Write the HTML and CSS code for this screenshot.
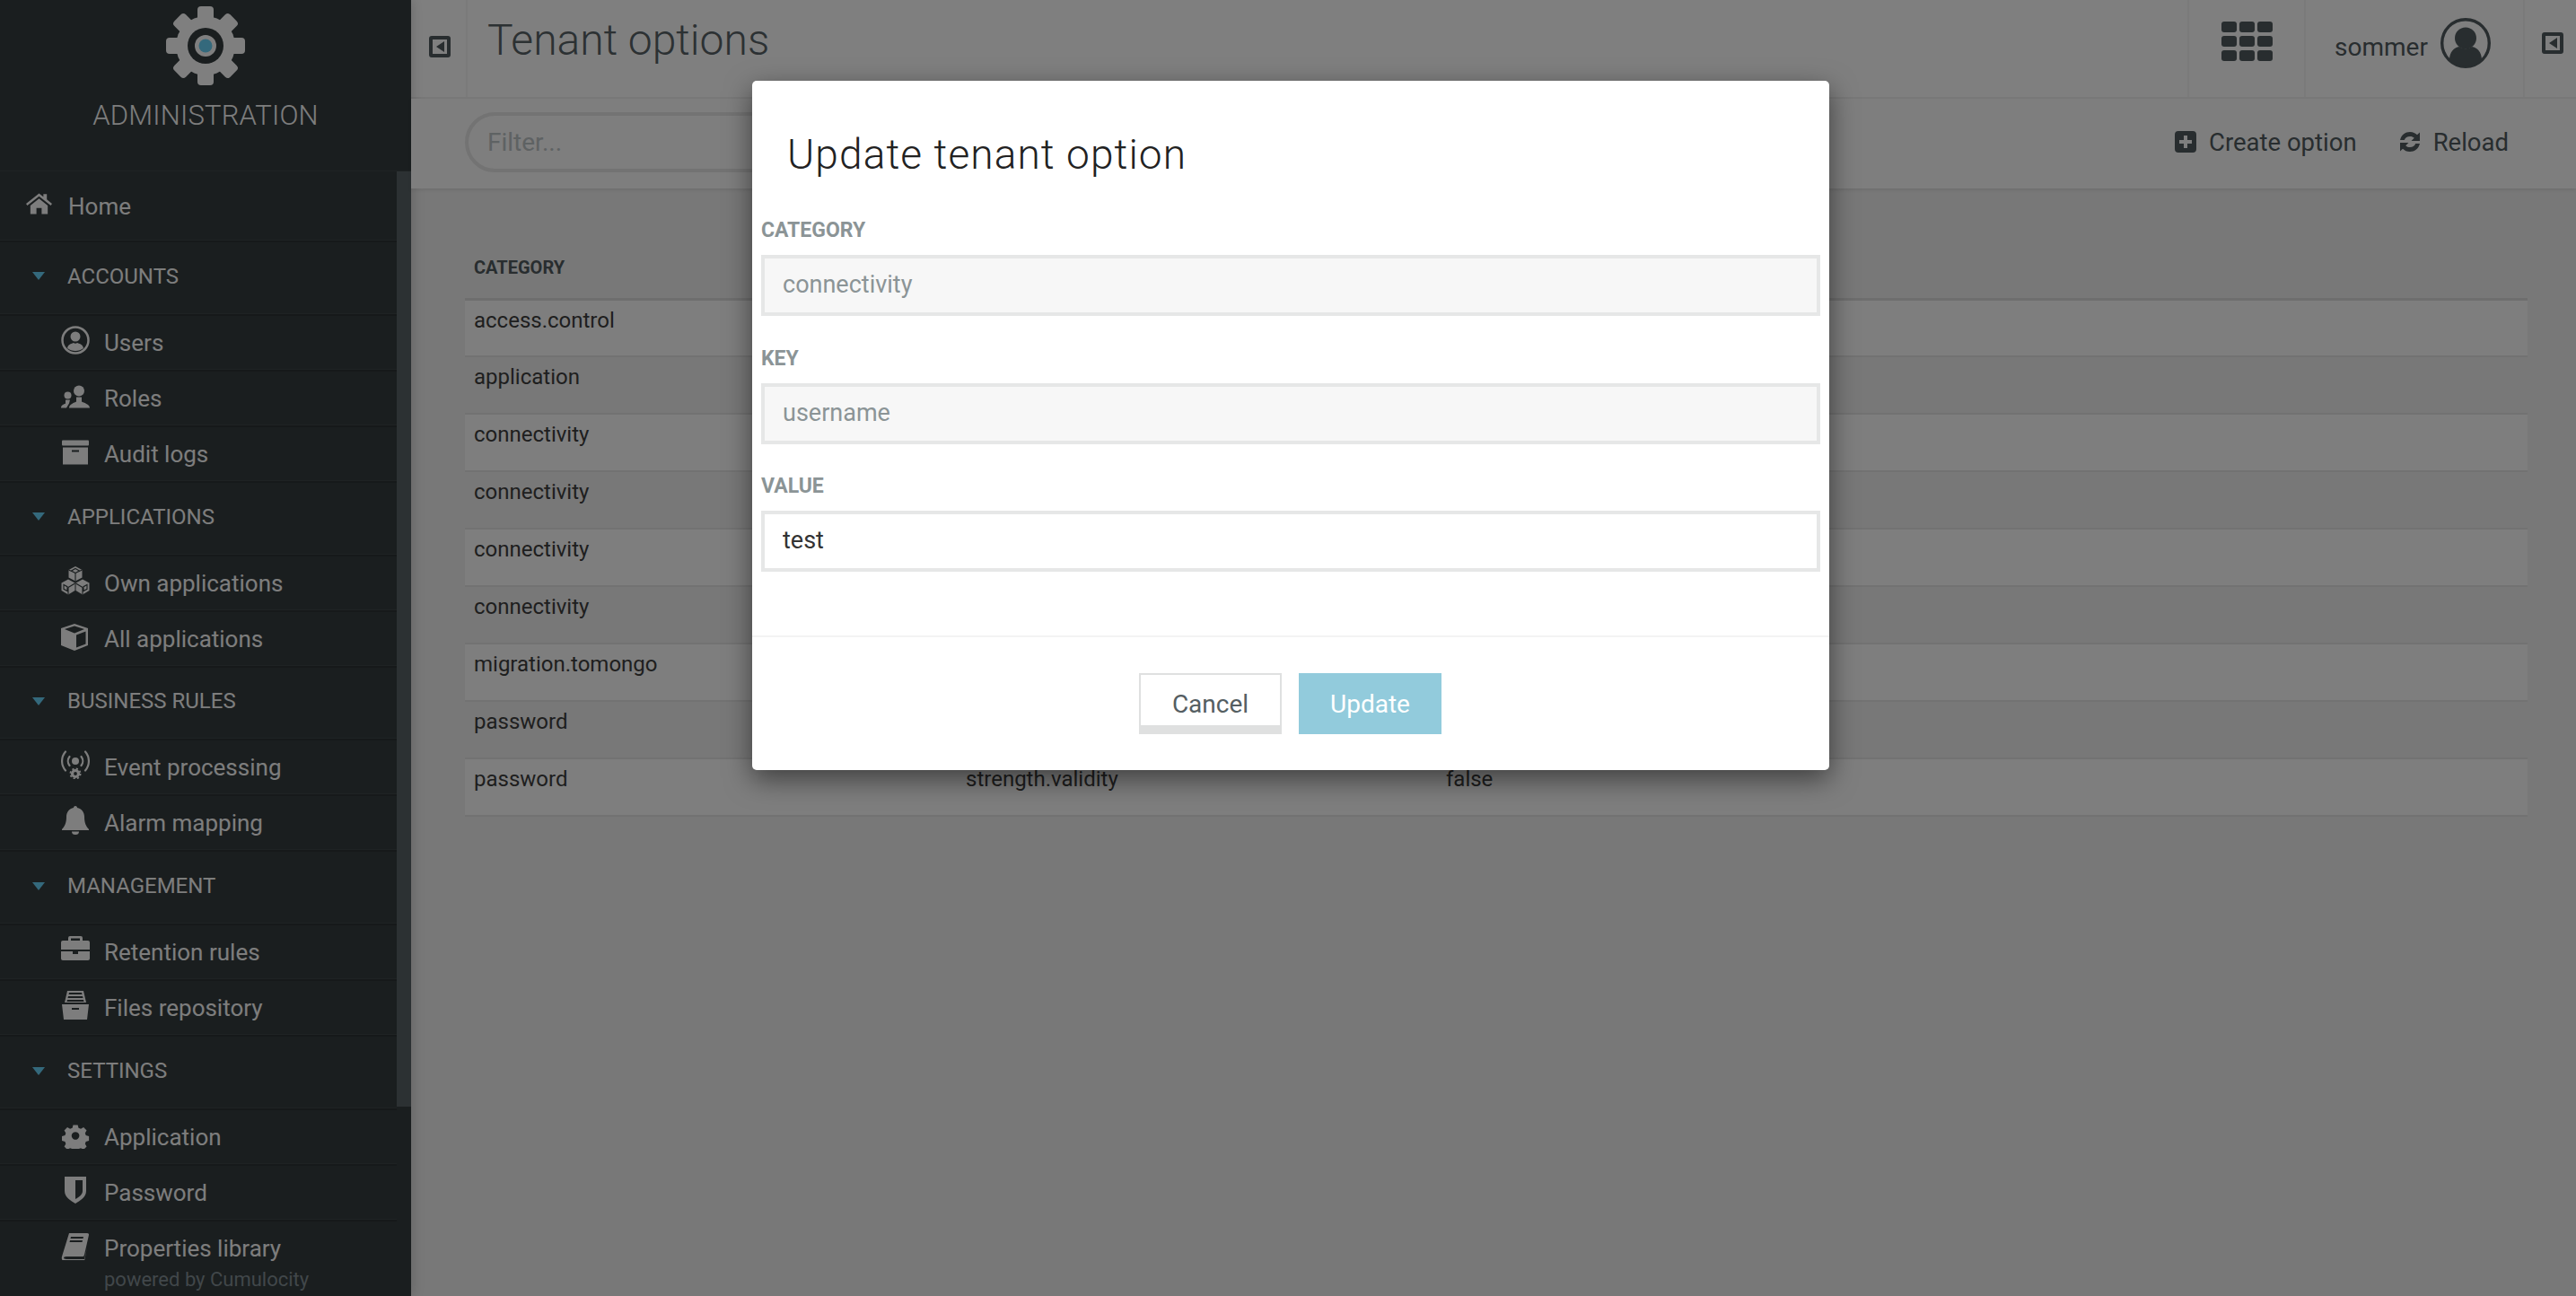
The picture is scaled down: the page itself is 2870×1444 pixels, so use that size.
FILE: index.html
```html
<!DOCTYPE html>
<html lang="en">
<head>
    <meta charset="UTF-8">
    <title>Tenant options</title>
    <link rel="stylesheet" href="styles.css">
</head>
<body>
    <div class="app">
        <aside class="sidebar">
            <div class="brand">
                <svg class="brand-gear" viewBox="0 0 88 88">
                    <g fill="#fff">
                        <rect x="35" y="0" width="18" height="22" rx="4"/>
                        <rect x="35" y="0" width="18" height="22" rx="4" transform="rotate(45 44 44)"/>
                        <rect x="35" y="0" width="18" height="22" rx="4" transform="rotate(90 44 44)"/>
                        <rect x="35" y="0" width="18" height="22" rx="4" transform="rotate(135 44 44)"/>
                        <rect x="35" y="0" width="18" height="22" rx="4" transform="rotate(180 44 44)"/>
                        <rect x="35" y="0" width="18" height="22" rx="4" transform="rotate(225 44 44)"/>
                        <rect x="35" y="0" width="18" height="22" rx="4" transform="rotate(270 44 44)"/>
                        <rect x="35" y="0" width="18" height="22" rx="4" transform="rotate(315 44 44)"/>
                        <circle cx="44" cy="44" r="33"/>
                    </g>
                    <circle cx="44" cy="44" r="20" fill="#343c3e"/>
                    <circle cx="44" cy="44" r="12" fill="#fff"/>
                    <circle cx="44" cy="44" r="7.5" fill="#68d2f8"/>
                </svg>
                <div class="brand-name">ADMINISTRATION</div>
            </div>

            <nav class="nav">
                <div class="scroll-thumb"></div>
                <a class="nav-home">
                    <svg class="home-icon" viewBox="0 0 30 24"><path d="M15 0 20 4V1h4v6l6 5-1.5 2L15 3.5 1.5 14 0 12z"/><path d="M5 14 15 6l10 8v10h-7v-7h-6v7H5z"/></svg>
                    Home
                </a>

                <div class="nav-group"><span class="caret"></span>ACCOUNTS</div>
                <a class="nav-item">
                    <svg class="nav-icon" viewBox="0 0 32 32"><circle cx="16" cy="16" r="14.5" fill="none" stroke="#fafafa" stroke-width="2.5"/><circle cx="16" cy="12" r="5.5"/><path d="M7 25c1-5 5-5 7-6 1 1 3 1 4 0 2 1 6 1 7 6-5 4-13 4-18 0z"/></svg>
                    Users
                </a>
                <a class="nav-item">
                    <svg class="nav-icon" viewBox="0 0 32 32"><g transform="translate(0 2.5)"><circle cx="20" cy="8" r="6"/><path d="M9 27c0-4 6-6 8-7v-5h6v5c2 1 9 3 9 7z"/><circle cx="7.5" cy="13" r="4"/><path d="M0 27c0-3 3-4 5-5v-4h5l-1 4-3 5z"/></g></svg>
                    Roles
                </a>
                <a class="nav-item">
                    <svg class="nav-icon" viewBox="0 0 32 32"><g transform="translate(0 2.5)"><rect x="1" y="1" width="30" height="6" rx="1"/><path fill-rule="evenodd" d="M2 9h28v19H2zM12 12v2h8v-2z"/></g></svg>
                    Audit logs
                </a>

                <div class="nav-group"><span class="caret"></span>APPLICATIONS</div>
                <a class="nav-item">
                    <svg class="nav-icon" viewBox="0 0 32 32">
                        <path d="M16 0l7.500 4v8.500L16 16.500 8.500 12.500V4z"/>
                        <path d="M8 14.500l7.500 4v8.500L8 31.500.5 27v-8.500z"/>
                        <path d="M24 14.500l7.500 4V27L24 31.500 16.500 27v-8.500z"/>
                        <g fill="none" stroke="#343c3e" stroke-width="1.100">
                            <path d="M16 2.500l4.500 2.500-4.500 2.500L11.500 5zM16 7.500v9M8.500 4l7.500 3.500L23.500 4"/>
                            <path d="M3 20.500l4 2.200v4.800l-4-2.200zM8 23.500l7.500-4.500M8 23.500v8"/>
                            <path d="M29 20.500l-4 2.200v4.800l4-2.200zM24 23.500l-7.500-4.500M24 23.500v8"/>
                        </g>
                    </svg>
                    Own applications
                </a>
                <a class="nav-item">
                    <svg class="nav-icon" viewBox="0 0 32 32"><g transform="translate(0 2)"><path fill-rule="evenodd" d="M15 0l15 5v19l-15 6L0 24V5zM15 2.500 4 6l11 4.500L26 6zM17 12.500v14l10.500-4V8.500z"/></g></svg>
                    All applications
                </a>

                <div class="nav-group"><span class="caret"></span>BUSINESS RULES</div>
                <a class="nav-item">
                    <svg class="nav-icon" viewBox="0 0 32 32"><circle cx="16" cy="12" r="4"/><g fill="none" stroke="#fafafa" stroke-width="2.200" stroke-linecap="round"><path d="M9.500 7a8 8 0 0 0 0 10M22.500 7a8 8 0 0 1 0 10M5 1.500a16 16 0 0 0 0 21M27 1.500a16 16 0 0 1 0 21"/></g><circle cx="16" cy="26" r="3.500" fill="none" stroke="#fafafa" stroke-width="3.200"/><circle cx="16" cy="26" r="5.600" fill="none" stroke="#fafafa" stroke-width="1.800" stroke-dasharray="2.200 2.200"/></svg>
                    Event processing
                </a>
                <a class="nav-item">
                    <svg class="nav-icon" viewBox="0 0 32 32"><path d="M16 0c1.500 0 2 1 2 2 5 1 8 5 8 10 0 7 2 11 5 14v1H1v-1c3-3 5-7 5-14 0-5 3-9 8-10 0-1 .5-2 2-2z"/><path d="M12 28.500h8a4 3.500 0 0 1-8 0z"/></svg>
                    Alarm mapping
                </a>

                <div class="nav-group"><span class="caret"></span>MANAGEMENT</div>
                <a class="nav-item">
                    <svg class="nav-icon" viewBox="0 0 32 32"><path fill-rule="evenodd" d="M10 1h12a2 2 0 0 1 2 2v3h6a2 2 0 0 1 2 2v8H0V8a2 2 0 0 1 2-2h6V3a2 2 0 0 1 2-2zm1 2.500V6h10V3.500z"/><path d="M0 18h13v3h6v-3h13v8a2 2 0 0 1-2 2H2a2 2 0 0 1-2-2z"/></svg>
                    Retention rules
                </a>
                <a class="nav-item">
                    <svg class="nav-icon" viewBox="0 0 32 32"><path fill-rule="evenodd" d="M7 0h18l3 13H4zM9 2l-.5 2h15L23 2zM8 6l-.5 2h17L24 6zM7 10l-.5 2h19L25 10z"/><path fill-rule="evenodd" d="M1 15h30l-2 17H3zM12 19v2h8v-2z"/></svg>
                    Files repository
                </a>

                <div class="nav-group"><span class="caret"></span>SETTINGS</div>
                <a class="nav-item">
                    <svg class="nav-icon" viewBox="0 0 32 32">
                        <path fill-rule="evenodd" d="M13 2h6l1 4 3 1 3.500-2 4 4-2 3.500 1 3 4 1v6l-4 1-1 3 2 3.500-4 4-3.500-2-3 1-1 4h-6l-1-4-3-1-3.500 2-4-4 2-3.500-1-3-4-1v-6l4-1 1-3-2-3.500 4-4 3.500 2 3-1zM16 11a5 5 0 1 0 .001 0z" transform="translate(2.300 3.700) scale(.86)"/>
                    </svg>
                    Application
                </a>
                <a class="nav-item">
                    <svg class="nav-icon" viewBox="0 0 32 32"><path fill-rule="evenodd" d="M4 1h24v16c0 7-7 11-12 14C11 28 4 24 4 17zM16 5v21c4-2 8-5 8-9V5z"/></svg>
                    Password
                </a>
                <a class="nav-item">
                    <svg class="nav-icon" viewBox="0 0 32 32"><path fill-rule="evenodd" d="M9 1h20c2 0 2 1 2 2l-5 22c-.5 2-1 2-3 2H6c-2 0-3 1-3 1.500S4 30 6 30h20l3-13-3 15H5c-3 0-5-1-4-5zM11 5l-.5 2h14l.5-2zM10 9l-.5 2h14l.5-2z" transform="translate(0 1)"/></svg>
                    Properties library
                </a>
            </nav>
            <div class="powered">powered by Cumulocity</div>
        </aside>

        <main class="main">
            <header class="topbar">
                <div class="top-cell collapse-cell">
                    <svg class="collapse-icon" viewBox="0 0 24 24"><path fill-rule="evenodd" d="M3 0h18a3 3 0 0 1 3 3v18a3 3 0 0 1-3 3H3a3 3 0 0 1-3-3V3a3 3 0 0 1 3-3zm1 4v16h16V4zm13 2v12L8 12z"/></svg>
                </div>
                <h1 class="page-title">Tenant options</h1>
                <div class="top-cell apps-cell">
                    <svg class="apps-icon" viewBox="0 0 57 44">
                        <rect x="0" y="0" width="17" height="12" rx="3"/><rect x="20" y="0" width="17" height="12" rx="3"/><rect x="40" y="0" width="17" height="12" rx="3"/>
                        <rect x="0" y="16" width="17" height="12" rx="3"/><rect x="20" y="16" width="17" height="12" rx="3"/><rect x="40" y="16" width="17" height="12" rx="3"/>
                        <rect x="0" y="32" width="17" height="12" rx="3"/><rect x="20" y="32" width="17" height="12" rx="3"/><rect x="40" y="32" width="17" height="12" rx="3"/>
                    </svg>
                </div>
                <div class="top-cell user-cell">
                    <span class="user-name">sommer</span>
                    <svg class="avatar" viewBox="0 0 56 56"><circle cx="28" cy="28" r="26.300" fill="none" stroke="#505a5e" stroke-width="3.400"/><circle cx="28" cy="22.500" r="12"/><path d="M10 47c0-9 5-14 11-15 4 3 10 3 14 0 6 1 11 6 11 15-4 4-11 7-18 7s-14-3-18-7z"/></svg>
                </div>
                <div class="top-cell end-cell">
                    <svg class="collapse-icon" viewBox="0 0 24 24"><path fill-rule="evenodd" d="M3 0h18a3 3 0 0 1 3 3v18a3 3 0 0 1-3 3H3a3 3 0 0 1-3-3V3a3 3 0 0 1 3-3zm1 4v16h16V4zm13 2v12L8 12z"/></svg>
                </div>
            </header>

            <div class="actionbar">
                <input class="filter" type="text" placeholder="Filter...">
                <div class="actions">
                    <a class="action">
                        <svg class="action-icon" viewBox="0 0 24 24"><path fill-rule="evenodd" d="M4 0h16a4 4 0 0 1 4 4v16a4 4 0 0 1-4 4H4a4 4 0 0 1-4-4V4a4 4 0 0 1 4-4zm6 5v5H5v4h5v5h4v-5h5v-4h-5V5z"/></svg>
                        Create option
                    </a>
                    <a class="action">
                        <svg class="action-icon" viewBox="0 0 24 24"><path d="M1 10C2.500 4 7 1 12 1c3.500 0 6 1.300 8 3.300L23 1.500V11h-9.500l3.300-3.200C15.500 6.500 14 6 12 6 9 6 6.700 7.500 5.800 10z"/><path d="M23 14c-1.500 6-6 9-11 9-3.500 0-6-1.300-8-3.300L1 22.500V13h9.500l-3.300 3.200C8.500 17.500 10 18 12 18c3 0 5.300-1.500 6.200-4z"/></svg>
                        Reload
                    </a>
                </div>
            </div>

            <div class="content">
                <table class="options">
                    <thead>
                        <tr><th class="col-cat">CATEGORY</th><th class="col-key">KEY</th><th>VALUE</th></tr>
                    </thead>
                    <tbody>
                        <tr><td>access.control</td><td></td><td></td></tr>
                        <tr><td>application</td><td></td><td></td></tr>
                        <tr><td>connectivity</td><td></td><td></td></tr>
                        <tr><td>connectivity</td><td></td><td></td></tr>
                        <tr><td>connectivity</td><td></td><td></td></tr>
                        <tr><td>connectivity</td><td></td><td></td></tr>
                        <tr><td>migration.tomongo</td><td></td><td></td></tr>
                        <tr><td>password</td><td></td><td></td></tr>
                        <tr><td>password</td><td>strength.validity</td><td>false</td></tr>
                    </tbody>
                </table>
            </div>
        </main>
    </div>

    <div class="backdrop"></div>

    <div class="modal">
        <h2 class="modal-title">Update tenant option</h2>
        <div class="modal-body">
            <div class="field">
                <label>CATEGORY</label>
                <input type="text" value="connectivity" disabled>
            </div>
            <div class="field">
                <label>KEY</label>
                <input type="text" value="username" disabled>
            </div>
            <div class="field">
                <label>VALUE</label>
                <input type="text" value="test">
            </div>
        </div>
        <div class="modal-footer">
            <button class="btn btn-cancel">Cancel</button>
            <button class="btn btn-update">Update</button>
        </div>
    </div>
</body>
</html>
```

FILE: styles.css
```css
* {
    box-sizing: border-box;
}
html, body {
    margin: 0;
    height: 100%;
    overflow: hidden;
}
body {
    font-family: Roboto, "Liberation Sans", sans-serif;
    color: #3e3e3e;
    background: #f0f0f0;
}
a {
    color: inherit;
    text-decoration: none;
}

.app {
    display: flex;
    height: 1444px;
}

/* sidebar */
.sidebar {
    width: 458px;
    flex: none;
    display: flex;
    flex-direction: column;
    background: #343c3e;
    color: #fafafa;
    box-shadow: 0 0 14px rgba(0, 0, 0, 0.2);
    position: relative;
}
.brand {
    height: 190px;
    flex: none;
    display: flex;
    flex-direction: column;
    align-items: center;
    padding-top: 7px;
}
.brand-gear {
    width: 88px;
    height: 88px;
    display: block;
}
.brand-name {
    margin-top: 12px;
    font-size: 31px;
    font-weight: 300;
    line-height: 44px;
    letter-spacing: 0.2px;
}
.nav {
    flex: 1;
    min-height: 0;
    overflow: hidden;
    padding-right: 16px;
    position: relative;
    border-top: 1px solid #3e4648;
}
.scroll-thumb {
    position: absolute;
    top: 0;
    right: 0;
    width: 16px;
    height: 1042px;
    background: #586266;
}
.nav-home, .nav-group, .nav-item {
    display: flex;
    align-items: center;
    border-bottom: 2px solid #2c3234;
    box-shadow: inset 0 -1px 0 #3e4648;
    font-size: 26px;
}
.nav-home {
    height: 79px;
    padding-left: 29px;
}
.home-icon {
    width: 29px;
    height: 24px;
    margin-right: 18px;
    margin-top: -6px;
    fill: #fafafa;
}
.nav-group {
    height: 81.8px;
    padding-left: 36px;
    padding-bottom: 4px;
    font-size: 24px;
}
.caret {
    width: 0;
    height: 0;
    margin-right: 25px;
    border-left: 7px solid transparent;
    border-right: 7px solid transparent;
    border-top: 9px solid #68d2f8;
}
.nav-item {
    height: 62px;
    padding-left: 68px;
}
.nav-icon {
    width: 32px;
    height: 32px;
    margin-right: 16px;
    margin-top: -6px;
    flex: none;
    fill: #fafafa;
}
.powered {
    height: 32px;
    flex: none;
    padding-left: 116px;
    font-size: 22px;
    line-height: 28px;
    color: #828e94;
}

/* top bar */
.main {
    flex: 1;
    min-width: 0;
    display: flex;
    flex-direction: column;
}
.topbar {
    height: 110px;
    flex: none;
    display: flex;
    background: #fff;
    border-bottom: 2px solid #f0f0f0;
}
.top-cell {
    display: flex;
    align-items: flex-start;
    flex: none;
    border-right: 2px solid #f4f4f4;
}
.collapse-cell {
    width: 63px;
    padding: 40px 0 0 20px;
}
.collapse-icon {
    width: 24px;
    height: 24px;
    fill: #505a5e;
}
.page-title {
    flex: 1;
    margin: 0;
    padding-left: 22px;
    font-size: 48px;
    font-weight: 300;
    line-height: 90px;
    color: #586266;
}
.apps-cell {
    width: 132px;
    padding: 24px 0 0 36px;
    border-left: 2px solid #f4f4f4;
}
.apps-icon {
    width: 57px;
    height: 44px;
    fill: #505a5e;
}
.user-cell {
    width: 244px;
    padding: 20px 0 0 32px;
}
.user-name {
    font-size: 28px;
    line-height: 66px;
    color: #505a5e;
    width: 118px;
}
.avatar {
    width: 56px;
    height: 56px;
    fill: #505a5e;
}
.end-cell {
    width: 57px;
    padding: 36px 0 0 19px;
    border-right: 0;
}

/* action bar */
.actionbar {
    height: 100px;
    flex: none;
    display: flex;
    align-items: center;
    justify-content: space-between;
    padding: 0 75px 4px 60px;
    background: #fcfcfc;
    box-shadow: 0 2px 4px rgba(0, 0, 0, 0.08);
    position: relative;
}
.filter {
    width: 620px;
    height: 67px;
    padding: 0 21px;
    border: 4px solid #e6e6e6;
    border-radius: 34px;
    background: #fcfcfc;
    font-family: inherit;
    font-size: 28px;
}
.filter::placeholder {
    color: #bcc4c6;
}
.actions {
    display: flex;
    gap: 47px;
}
.action {
    display: flex;
    align-items: center;
    gap: 14px;
    font-size: 27.500px;
    color: #505a5e;
}
.action-icon {
    width: 24px;
    height: 24px;
    fill: #505a5e;
}

/* table */
.content {
    flex: 1;
    padding: 62px 54px 0 60px;
}
.options {
    width: 100%;
    border-collapse: collapse;
    table-layout: fixed;
}
.options th {
    height: 61px;
    padding: 0 10px 7px;
    border-bottom: 3px solid #dcdcdc;
    font-size: 20px;
    font-weight: 700;
    text-align: left;
    color: #505a5e;
}
.col-cat {
    width: 548px;
}
.col-key {
    width: 535px;
}
.options td {
    height: 64px;
    padding: 7px 10px 0;
    vertical-align: top;
    border-bottom: 2px solid #e4e4e4;
    font-size: 24px;
    line-height: 30px;
    color: #3e3e3e;
}
.options tbody tr:nth-child(odd) td {
    background: #fcfcfc;
}

/* modal */
.backdrop {
    position: absolute;
    inset: 0;
    background: rgba(0, 0, 0, 0.5);
}
.modal {
    position: absolute;
    left: 838px;
    top: 90px;
    width: 1200px;
    height: 768px;
    display: flex;
    flex-direction: column;
    background: #fff;
    border-radius: 5px;
    box-shadow: 0 10px 30px rgba(0, 0, 0, 0.5);
}
.modal-title {
    height: 153px;
    flex: none;
    margin: 0;
    padding: 48px 0 0 39px;
    font-size: 46px;
    font-weight: 300;
    line-height: 68px;
    letter-spacing: 1.1px;
    color: #222;
}
.modal-body {
    flex: 1;
    padding: 0 10px;
}
.field {
    height: 142.500px;
}
.field label {
    display: block;
    height: 41px;
    padding-top: 2px;
    font-size: 23px;
    font-weight: 700;
    line-height: 24px;
    color: #8b9496;
}
.field input {
    display: block;
    width: 100%;
    height: 68px;
    padding: 0 20px 2px;
    border: 4px solid #e6e7e7;
    border-radius: 0;
    background: #fff;
    font-family: inherit;
    font-size: 27px;
    color: #333;
}
.field input:disabled {
    background: #f7f7f7;
    color: #8b9496;
}
.modal-footer {
    height: 150px;
    flex: none;
    display: flex;
    justify-content: center;
    gap: 19px;
    padding: 40px 1px 0 0;
    border-top: 2px solid #f3f3f3;
}
.btn {
    width: 159px;
    height: 68px;
    font-family: inherit;
    font-size: 28px;
    border-radius: 0;
}
.btn-cancel {
    padding: 8px 0 0;
    background: #fff;
    border: 2px solid #dfe0e0;
    border-bottom-width: 10px;
    color: #555e62;
}
.btn-update {
    padding: 0;
    background: #92cbdc;
    border: 0;
    color: #fff;
}
```
